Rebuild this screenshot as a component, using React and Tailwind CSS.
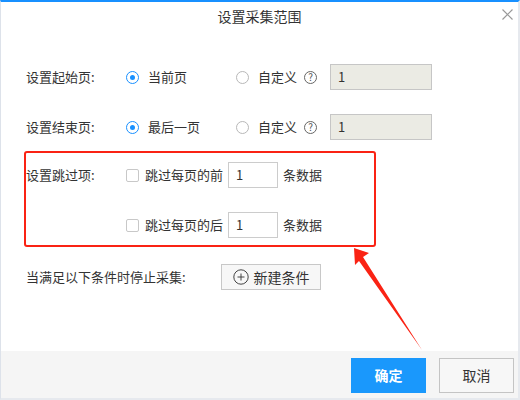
import { useState } from 'react';

const Radio = ({ checked }) => (
  <span
    className={
      checked
        ? 'flex h-[13px] w-[13px] items-center justify-center rounded-full border border-[#1890ff] bg-white'
        : 'flex h-[13px] w-[13px] items-center justify-center rounded-full border border-[#b8b8b8] bg-white'
    }
  >
    {checked && <span className="h-[5px] w-[5px] rounded-full bg-[#1890ff]" />}
  </span>
);

const Help = () => (
  <span className="flex h-[13px] w-[13px] items-center justify-center rounded-full border border-[#666] text-[10px] leading-none text-[#555]">
    ?
  </span>
);

const PageRow = ({ label, first }) => (
  <div className="flex h-[26px] items-center">
    <span className="w-[100px]">{label}</span>
    <div className="flex w-[110px] items-center">
      <Radio checked />
      <span className="ml-[9px]">{first}</span>
    </div>
    <Radio />
    <span className="ml-[9px]">自定义</span>
    <span className="ml-[7px]">
      <Help />
    </span>
    <div className="ml-[13px] flex h-[26px] w-[102px] items-center border border-[#c6c6c6] bg-[#ebebe4] pl-[7px] text-[#333]">
      1
    </div>
  </div>
);

const SkipRow = ({ label, text }) => (
  <div className="flex h-[26px] items-center">
    <span className="w-[100px]">{label}</span>
    <span className="h-[13px] w-[13px] rounded-[2px] border border-[#c8c8c8] bg-white" />
    <span className="ml-[6px]">{text}</span>
    <div className="ml-[5px] flex h-[26px] w-[50px] items-center border border-[#cccccc] bg-white pl-[7px]">
      1
    </div>
    <span className="ml-[5px]">条数据</span>
  </div>
);

export default function App() {
  const [open] = useState(true);
  if (!open) return null;

  return (
    <div className="relative h-[400px] w-[520px] font-['Noto_Sans_CJK_SC','Noto_Sans',sans-serif] text-[13px] text-[#333]">
      <div className="flex h-full w-full flex-col border-t-2 border-r-2 border-b-2 border-l border-t-[#1890ff] border-r-[#e6e9ee] border-b-[#e6e9ee] border-l-[#dde2ea] bg-white">
        {/* header */}
        <div className="relative flex h-[28px] items-center justify-center text-[14px] text-[#333]">
          设置采集范围
          <svg className="absolute top-[7px] right-[5px] h-[11px] w-[11px]" viewBox="0 0 11 11">
            <path d="M0.5 0.5 L10.5 10.5 M10.5 0.5 L0.5 10.5" stroke="#999" strokeWidth="1.2" fill="none" />
          </svg>
        </div>

        {/* body */}
        <div className="flex-1 pt-[34px] pl-[25px]">
          <PageRow label="设置起始页:" first="当前页" />
          <div className="mt-[24px]">
            <PageRow label="设置结束页:" first="最后一页" />
          </div>

          <div className="mt-[11px] -ml-[2px] w-[352px] rounded-[3px] border-2 border-[#fa2314] pt-[9px] pb-[7px]">
            <SkipRow label="设置跳过项:" text="跳过每页的前" />
            <div className="mt-[24px]">
              <SkipRow label="" text="跳过每页的后" />
            </div>
          </div>

          <div className="mt-[17px] flex h-[26px] items-center">
            <span className="w-[195px]">当满足以下条件时停止采集:</span>
            <button className="flex h-[26px] w-[100px] items-center justify-center gap-[5px] border border-[#c8c8c8] bg-[#f7f7f7] text-[14px] text-[#333]">
              <svg className="h-[16px] w-[16px]" viewBox="0 0 16 16">
                <circle cx="8" cy="8" r="7.2" stroke="#444" strokeWidth="1" fill="none" />
                <path d="M8 4.5 V11.5 M4.5 8 H11.5" stroke="#444" strokeWidth="1" />
              </svg>
              新建条件
            </button>
          </div>
        </div>

        {/* footer */}
        <div className="flex h-[47px] items-start justify-end gap-[13px] bg-[#f5f5f5] pt-[7px] pr-[4px] text-[14px]">
          <button className="h-[35px] w-[75px] bg-[#1a98fc] font-bold text-white">确定</button>
          <button className="h-[35px] w-[75px] border border-[#c4c4c4] bg-[#f7f7f7] text-[#333]">取消</button>
        </div>
      </div>

      {/* annotation arrow */}
      <svg className="pointer-events-none absolute inset-0 h-[400px] w-[520px]" viewBox="0 0 520 400">
        <polygon points="354,248 369,253 363,257 422,350 359,261 355,265" fill="#fa2314" />
      </svg>
    </div>
  );
}
